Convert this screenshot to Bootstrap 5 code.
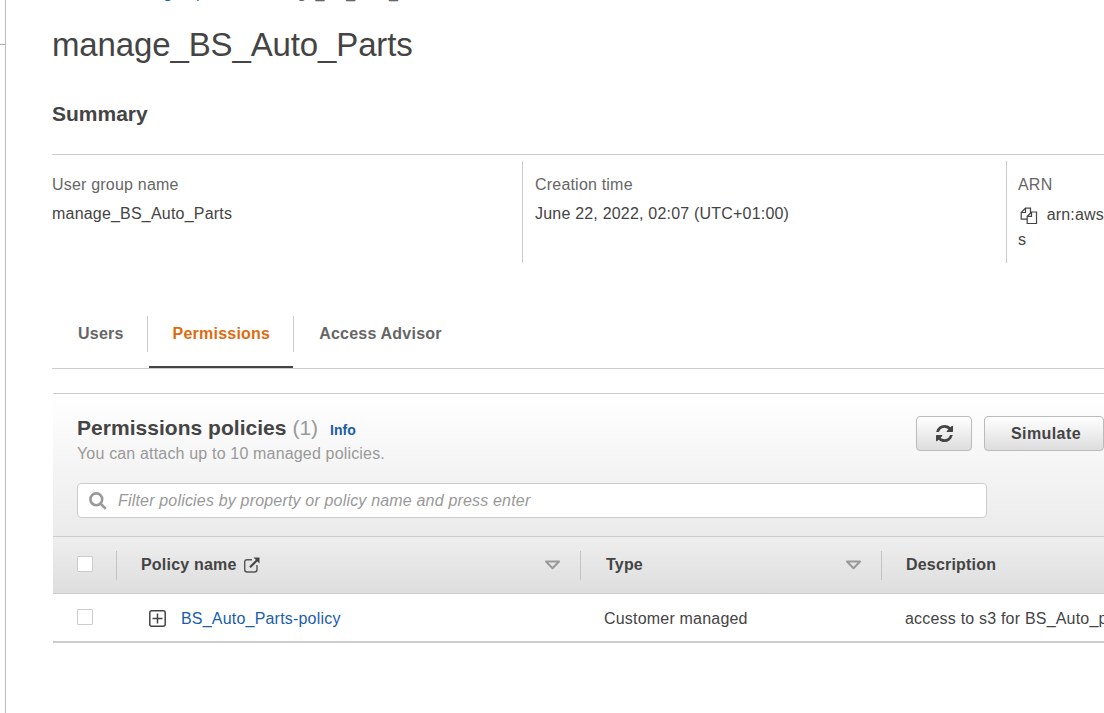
<!DOCTYPE html>
<html lang="en">
<head>
<meta charset="utf-8">
<meta name="viewport" content="width=device-width, initial-scale=1">
<title>manage_BS_Auto_Parts</title>
<link href="https://cdn.jsdelivr.net/npm/bootstrap@5.3.0/dist/css/bootstrap.min.css" rel="stylesheet">
<style>
body{font-family:"Liberation Sans",Arial,sans-serif;font-size:16px;line-height:24px;color:#444;letter-spacing:.2px;height:713px;width:1104px}
.side-rail{width:6px;flex:none;border-right:1px solid #bbb}
.side-rail hr{margin:44px 0 0;border-color:#aaa;opacity:1}
.page-main{padding-left:46px;min-width:0}
.crumbs{height:2px;position:relative}
.crumbs .trail{position:absolute;left:0;bottom:-1px;line-height:20px;white-space:nowrap;display:flex;align-items:center;color:#666}
.crumbs svg{margin:0 17px}
.crumbs a,.plain-link{color:#1b5dab;text-decoration:none}
.page-title{font-size:33px;line-height:40px;letter-spacing:-.13px;margin:23px 0 0;font-weight:400}
.summary-title{font-size:21px;line-height:26px;margin:36px 0 0;font-weight:700;letter-spacing:0}
.facts{margin-top:27px;border-top:1px solid #ccc;padding-top:6px;white-space:nowrap}
.fact{height:102px;flex:none;padding-top:12px;padding-left:12px;border-left:1px solid #ccc}
.fact:first-child{width:470px;padding-left:0;border:0}
.fact:nth-child(2){width:484px}
.fact:nth-child(3){width:98px;padding-left:11px}
.fact dt{font-weight:400;color:#666}
.fact dd{margin:5px 0 0}
.fact .arn{margin-top:5px;line-height:25px}
.arn svg{margin:0 4px 0 2px}
.group-tabs{margin-top:49px;height:57px;border-bottom:1px solid #ccc}
.group-tabs .nav-link{color:#666;font-weight:700;padding:6px 23px 0 25px;height:53px;border-bottom:0;letter-spacing:.22px}
.group-tabs .nav-item{height:56px;padding-top:4px}
.group-tabs .nav-item:first-child .nav-link{padding-left:26px}
.group-tabs .nav-link.active{color:#dd6b10;height:52px;border-bottom:2px solid #444;margin-left:1px;padding-left:24px}
.tab-rule{width:1px;height:36px;margin-top:4px;background:#ccc}
.policies{margin:24px 0 0 1px;border-bottom:2px solid #ccc}
.policies-head{height:143px;border-top:1px solid #ccc;padding:22px 0 0 24px;background:linear-gradient(#fff,#ebebeb)}
.policies-title{font-size:21px;line-height:25px;font-weight:700;margin:-1px 0 0;letter-spacing:.03px}
.count{font-weight:400;color:#999}
.info{font-size:14px;margin-left:6px}
.hint{color:#999;line-height:24px;margin-top:-1px;letter-spacing:.17px}
.btn-soft{height:35px;padding:0;border:1px solid #bbb;border-radius:4px;background:linear-gradient(#fff,#ddd);font-weight:700;color:#444;letter-spacing:.4px;line-height:24px}
.btn-soft svg{margin-bottom:2px}
.filter{width:910px;height:35px;margin-top:17px;border:1px solid #ccc;border-radius:4px;background:#fff;color:#999;font-style:italic;padding-left:11px;letter-spacing:.18px}
.table-grid{display:grid;grid-template-columns:63px 464px 301px 223px}
.table-grid>*{display:flex;align-items:center;white-space:nowrap}
.cols{height:58px;border-top:1px solid #ccc;border-bottom:1px solid #ccc;background:linear-gradient(#eee,#dedede);font-weight:700}
.cols>*+*{height:29px;align-self:center;border-left:1px solid #c4c4c4;padding-left:24px}
.cols>.type-col{padding-left:25px}
.policy-row{height:47px}
.policy-row>*+*{padding:2px 0 0 24px}
.policy-row>.policy-name{padding-left:33px}
.tick{width:16px;height:16px;border:1px solid #ccc;border-radius:1px;background:#fff;margin:0 0 2px 24px}
.sorter{margin-left:auto;margin-right:19px}
.ext{margin-left:7px}
</style>
</head>
<body class="bg-white d-flex overflow-hidden">
<aside class="side-rail"><hr></aside>
<main class="page-main flex-grow-1">
  <nav class="crumbs"><div class="trail"><a href="#">IAM</a><svg width="9" height="14" viewBox="0 0 9 14" fill="none" stroke="#999" stroke-width="1.500"><path d="M1 1l6 6-6 6"/></svg><a href="#">User groups</a><svg width="9" height="14" viewBox="0 0 9 14" fill="none" stroke="#999" stroke-width="1.500"><path d="M1 1l6 6-6 6"/></svg><span>manage_BS_Auto_Parts</span></div></nav>
  <h1 class="page-title">manage_BS_Auto_Parts</h1>
  <h2 class="summary-title">Summary</h2>
  <section class="facts d-flex">
    <dl class="fact mb-0"><dt>User group name</dt><dd>manage_BS_Auto_Parts</dd></dl>
    <dl class="fact mb-0"><dt>Creation time</dt><dd>June 22, 2022, 02:07 (UTC+01:00)</dd></dl>
    <dl class="fact mb-0"><dt>ARN</dt><dd class="arn"><svg width="18" height="18" viewBox="0 0 18 18" fill="#fff" stroke="#444" stroke-width="1.200"><path d="M5.500 1.200h5v11H1.200V5.500zM5.500 1.200V5.500H1.200"/><path d="M11.500 5h5v11.500H7.200V9.300zM11.500 5V9.300H7.200"/></svg> arn:aws<br>s</dd></dl>
  </section>
  <ul class="nav group-tabs flex-nowrap">
    <li class="nav-item"><a class="nav-link" href="#">Users</a></li>
    <li class="tab-rule"></li>
    <li class="nav-item"><a class="nav-link active" href="#">Permissions</a></li>
    <li class="tab-rule"></li>
    <li class="nav-item"><a class="nav-link" href="#">Access Advisor</a></li>
  </ul>
  <section class="policies">
    <header class="policies-head">
      <div class="d-flex justify-content-between">
        <div>
          <h2 class="policies-title">Permissions policies <span class="count">(1)</span> <a class="plain-link info" href="#">Info</a></h2>
          <div class="hint">You can attach up to 10 managed policies.</div>
        </div>
        <div class="d-flex gap-2">
          <button class="btn btn-soft" style="width:56px"><svg width="17" height="17" viewBox="0 0 1536 1536" fill="#444"><path d="M1511 928q0 5-1 7-64 268-268 434.500T764 1536q-146 0-282.500-55T238 1324l-129 129q-19 19-45 19t-45-19-19-45V960q0-26 19-45t45-19h448q26 0 45 19t19 45-19 45l-137 137q71 66 161 102t187 36q134 0 250-65t186-179q11-17 53-117 8-23 30-23h192q13 0 22.500 9.500t9.500 22.500zm25-800v448q0 26-19 45t-45 19h-448q-26 0-45-19t-19-45 19-45l138-138Q969 256 768 256q-134 0-250 65T332 500q-11 17-53 117-8 23-30 23H50q-13 0-22.500-9.500T18 608v-7q65-268 270-434.500T768 0q146 0 284 55.500T1297 212l130-129q19-19 45-19t45 19 19 45z"/></svg></button>
          <button class="btn btn-soft ms-1 ps-1" style="width:120px">Simulate</button>
        </div>
      </div>
      <div class="filter d-flex align-items-center"><svg width="18" height="18" viewBox="0 0 18 18" fill="none" stroke="#999" stroke-width="2.600"><circle cx="7.300" cy="7.300" r="5.900"/><path d="M11.600 11.600l5.200 5.200"/></svg><span style="margin-left:11px">Filter policies by property or policy name and press enter</span></div>
    </header>
    <div class="table-grid cols">
      <div><span class="tick"></span></div>
      <div>Policy name<svg class="ext" width="16" height="16" viewBox="0 0 16 16" fill="none" stroke="#555" stroke-width="1.400"><path d="M8 2.700H3.200Q.7 2.700.7 5.200v7.300Q.7 15 3.200 15h7.300q2.500 0 2.500-2.500V8"/><path d="M6 10.200L13.500 2.700" stroke="#444" stroke-width="2.200"/><path d="M9.500.5H15.500V6.500z" fill="#444" stroke="none"/></svg><svg class="sorter" width="17" height="10" viewBox="0 0 17 10" fill="none" stroke="#999" stroke-width="2"><path d="M2 1.500h13L8.500 8.200z" stroke-linejoin="round"/></svg></div>
      <div class="type-col">Type<svg class="sorter" width="17" height="10" viewBox="0 0 17 10" fill="none" stroke="#999" stroke-width="2"><path d="M2 1.500h13L8.500 8.200z" stroke-linejoin="round"/></svg></div>
      <div>Description</div>
    </div>
    <div class="table-grid policy-row">
      <div><span class="tick"></span></div>
      <div class="policy-name"><svg width="17" height="17" viewBox="0 0 17 17" fill="none" stroke="#444" stroke-width="1.500"><rect x=".8" y=".8" width="15.400" height="15.400" rx="2"/><path d="M3.500 8.500h10M8.500 3.500v10"/></svg><a class="plain-link" style="margin-left:15px" href="#">BS_Auto_Parts-policy</a></div>
      <div>Customer managed</div>
      <div>access to s3 for BS_Auto_parts</div>
    </div>
  </section>
</main>
<script src="https://cdn.jsdelivr.net/npm/bootstrap@5.3.0/dist/js/bootstrap.bundle.min.js"></script>
</body>
</html>
